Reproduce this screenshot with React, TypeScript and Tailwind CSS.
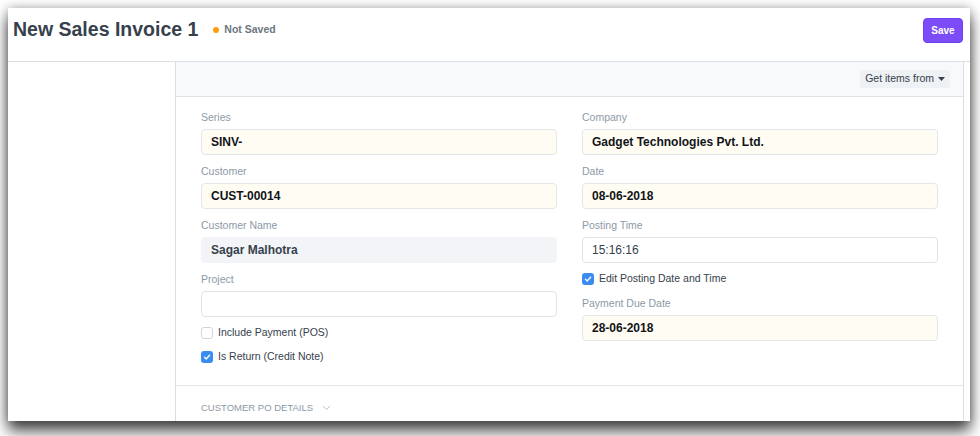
import React from "react";

const font = { fontFamily: '"Liberation Sans", Arial, sans-serif' };

function Label({ children }: { children: React.ReactNode }) {
  return <div className="h-[16px] mb-[4px] text-[10.5px] leading-[16px] text-[#8d99a6]">{children}</div>;
}

function Field({
  label,
  value,
  variant = "yellow",
}: {
  label: string;
  value?: string;
  variant?: "yellow" | "gray" | "white" | "plain";
}) {
  const box =
    variant === "yellow"
      ? "bg-[#fffdf3] border border-[#e3e7ea] font-bold text-[#111418]"
      : variant === "gray"
      ? "bg-[#f2f4f7] border border-[#f2f4f7] font-bold text-[#36414c]"
      : variant === "white"
      ? "bg-white border border-[#dfe4e8] font-bold text-[#111418]"
      : "bg-white border border-[#dfe4e8] font-normal text-[#36414c]";
  return (
    <div className="mb-[8px]">
      <Label>{label}</Label>
      <div className={`h-[26px] rounded-[4px] px-[9px] flex items-center text-[12px] ${box}`}>{value}</div>
    </div>
  );
}

function Check({ checked, label, last = false }: { checked: boolean; label: string; last?: boolean }) {
  return (
    <div className={`h-[16px] flex items-center gap-[5px] ${last ? "" : "mb-[8px]"}`}>
      {checked ? (
        <div className="w-[12px] h-[12px] rounded-[3px] bg-[#3a8cf0] flex items-center justify-center">
          <svg width="8" height="8" viewBox="0 0 8 8">
            <path d="M1.5 4.2 L3.3 5.9 L6.6 2.2" fill="none" stroke="white" strokeWidth="1.4" strokeLinecap="round" strokeLinejoin="round" />
          </svg>
        </div>
      ) : (
        <div className="w-[12px] h-[12px] rounded-[3px] border border-[#cfd6dc] bg-white" />
      )}
      <span className="text-[10.5px] text-[#36414c]">{label}</span>
    </div>
  );
}

export default function App() {
  return (
    <div className="w-[980px] h-[436px] bg-white overflow-hidden pt-[8px] pl-[8px]" style={font}>
      <div className="w-[962px] h-[413px] bg-white flex flex-col shadow-[0_10px_14px_rgba(0,0,0,0.7),0_0_10px_rgba(0,0,0,0.3)]">
        {/* header */}
        <div className="h-[54px] shrink-0 border-b border-[#d8dee3] flex items-center justify-between pl-[5px] pr-[7px] pb-[9px]">
          <div className="flex items-center">
            <span className="text-[19.5px] font-bold text-[#36414c] leading-none">New Sales Invoice 1</span>
            <span className="ml-[15px] w-[6px] h-[6px] rounded-full bg-[#ff9d0a]" />
            <span className="ml-[5px] text-[10.5px] font-bold text-[#6c7680]">Not Saved</span>
          </div>
          <button className="w-[40px] h-[25px] rounded-[4px] bg-[#7b4cf8] border border-[#6f3ff0] text-white text-[10px] font-bold">
            Save
          </button>
        </div>
        {/* body */}
        <div className="flex flex-1 min-h-0">
          <div className="w-[168px] shrink-0 border-r border-[#d8dee3]" />
          <div className="w-[788px] shrink-0 border-r border-[#d8dee3] flex flex-col">
            <div className="h-[35px] shrink-0 bg-[#f7f9fb] border-b border-[#dfe4e8] flex items-center justify-end pr-[13px]">
              <div className="h-[18px] px-[5px] rounded-[3px] bg-[#eef2f5] flex items-center gap-[4px] text-[10.5px] text-[#36414c]">
                Get items from
                <svg width="7" height="4" viewBox="0 0 7 4">
                  <path d="M0 0 L7 0 L3.5 4 Z" fill="#36414c" />
                </svg>
              </div>
            </div>
            <div className="grid grid-cols-2 gap-x-[25px] px-[25px] pt-[12px] pb-[20px] border-b border-[#e2e6e9]">
              <div>
                <Field label="Series" value="SINV-" />
                <Field label="Customer" value="CUST-00014" />
                <Field label="Customer Name" value="Sagar Malhotra" variant="gray" />
                <Field label="Project" variant="white" />
                <Check checked={false} label="Include Payment (POS)" />
                <Check checked={true} label="Is Return (Credit Note)" last />
              </div>
              <div>
                <Field label="Company" value="Gadget Technologies Pvt. Ltd." />
                <Field label="Date" value="08-06-2018" />
                <Field label="Posting Time" value="15:16:16" variant="plain" />
                <Check checked={true} label="Edit Posting Date and Time" />
                <Field label="Payment Due Date" value="28-06-2018" />
              </div>
            </div>
            <div className="px-[25px] pt-[14px] flex items-center gap-[9px] h-[30px]">
              <span className="text-[9.5px] text-[#8d99a6]">CUSTOMER PO DETAILS</span>
              <svg width="9" height="6" viewBox="0 0 9 6">
                <path d="M1 1 L4.5 4.5 L8 1" fill="none" stroke="#b8c2cc" strokeWidth="1" />
              </svg>
            </div>
          </div>
        </div>
      </div>
    </div>
  );
}
